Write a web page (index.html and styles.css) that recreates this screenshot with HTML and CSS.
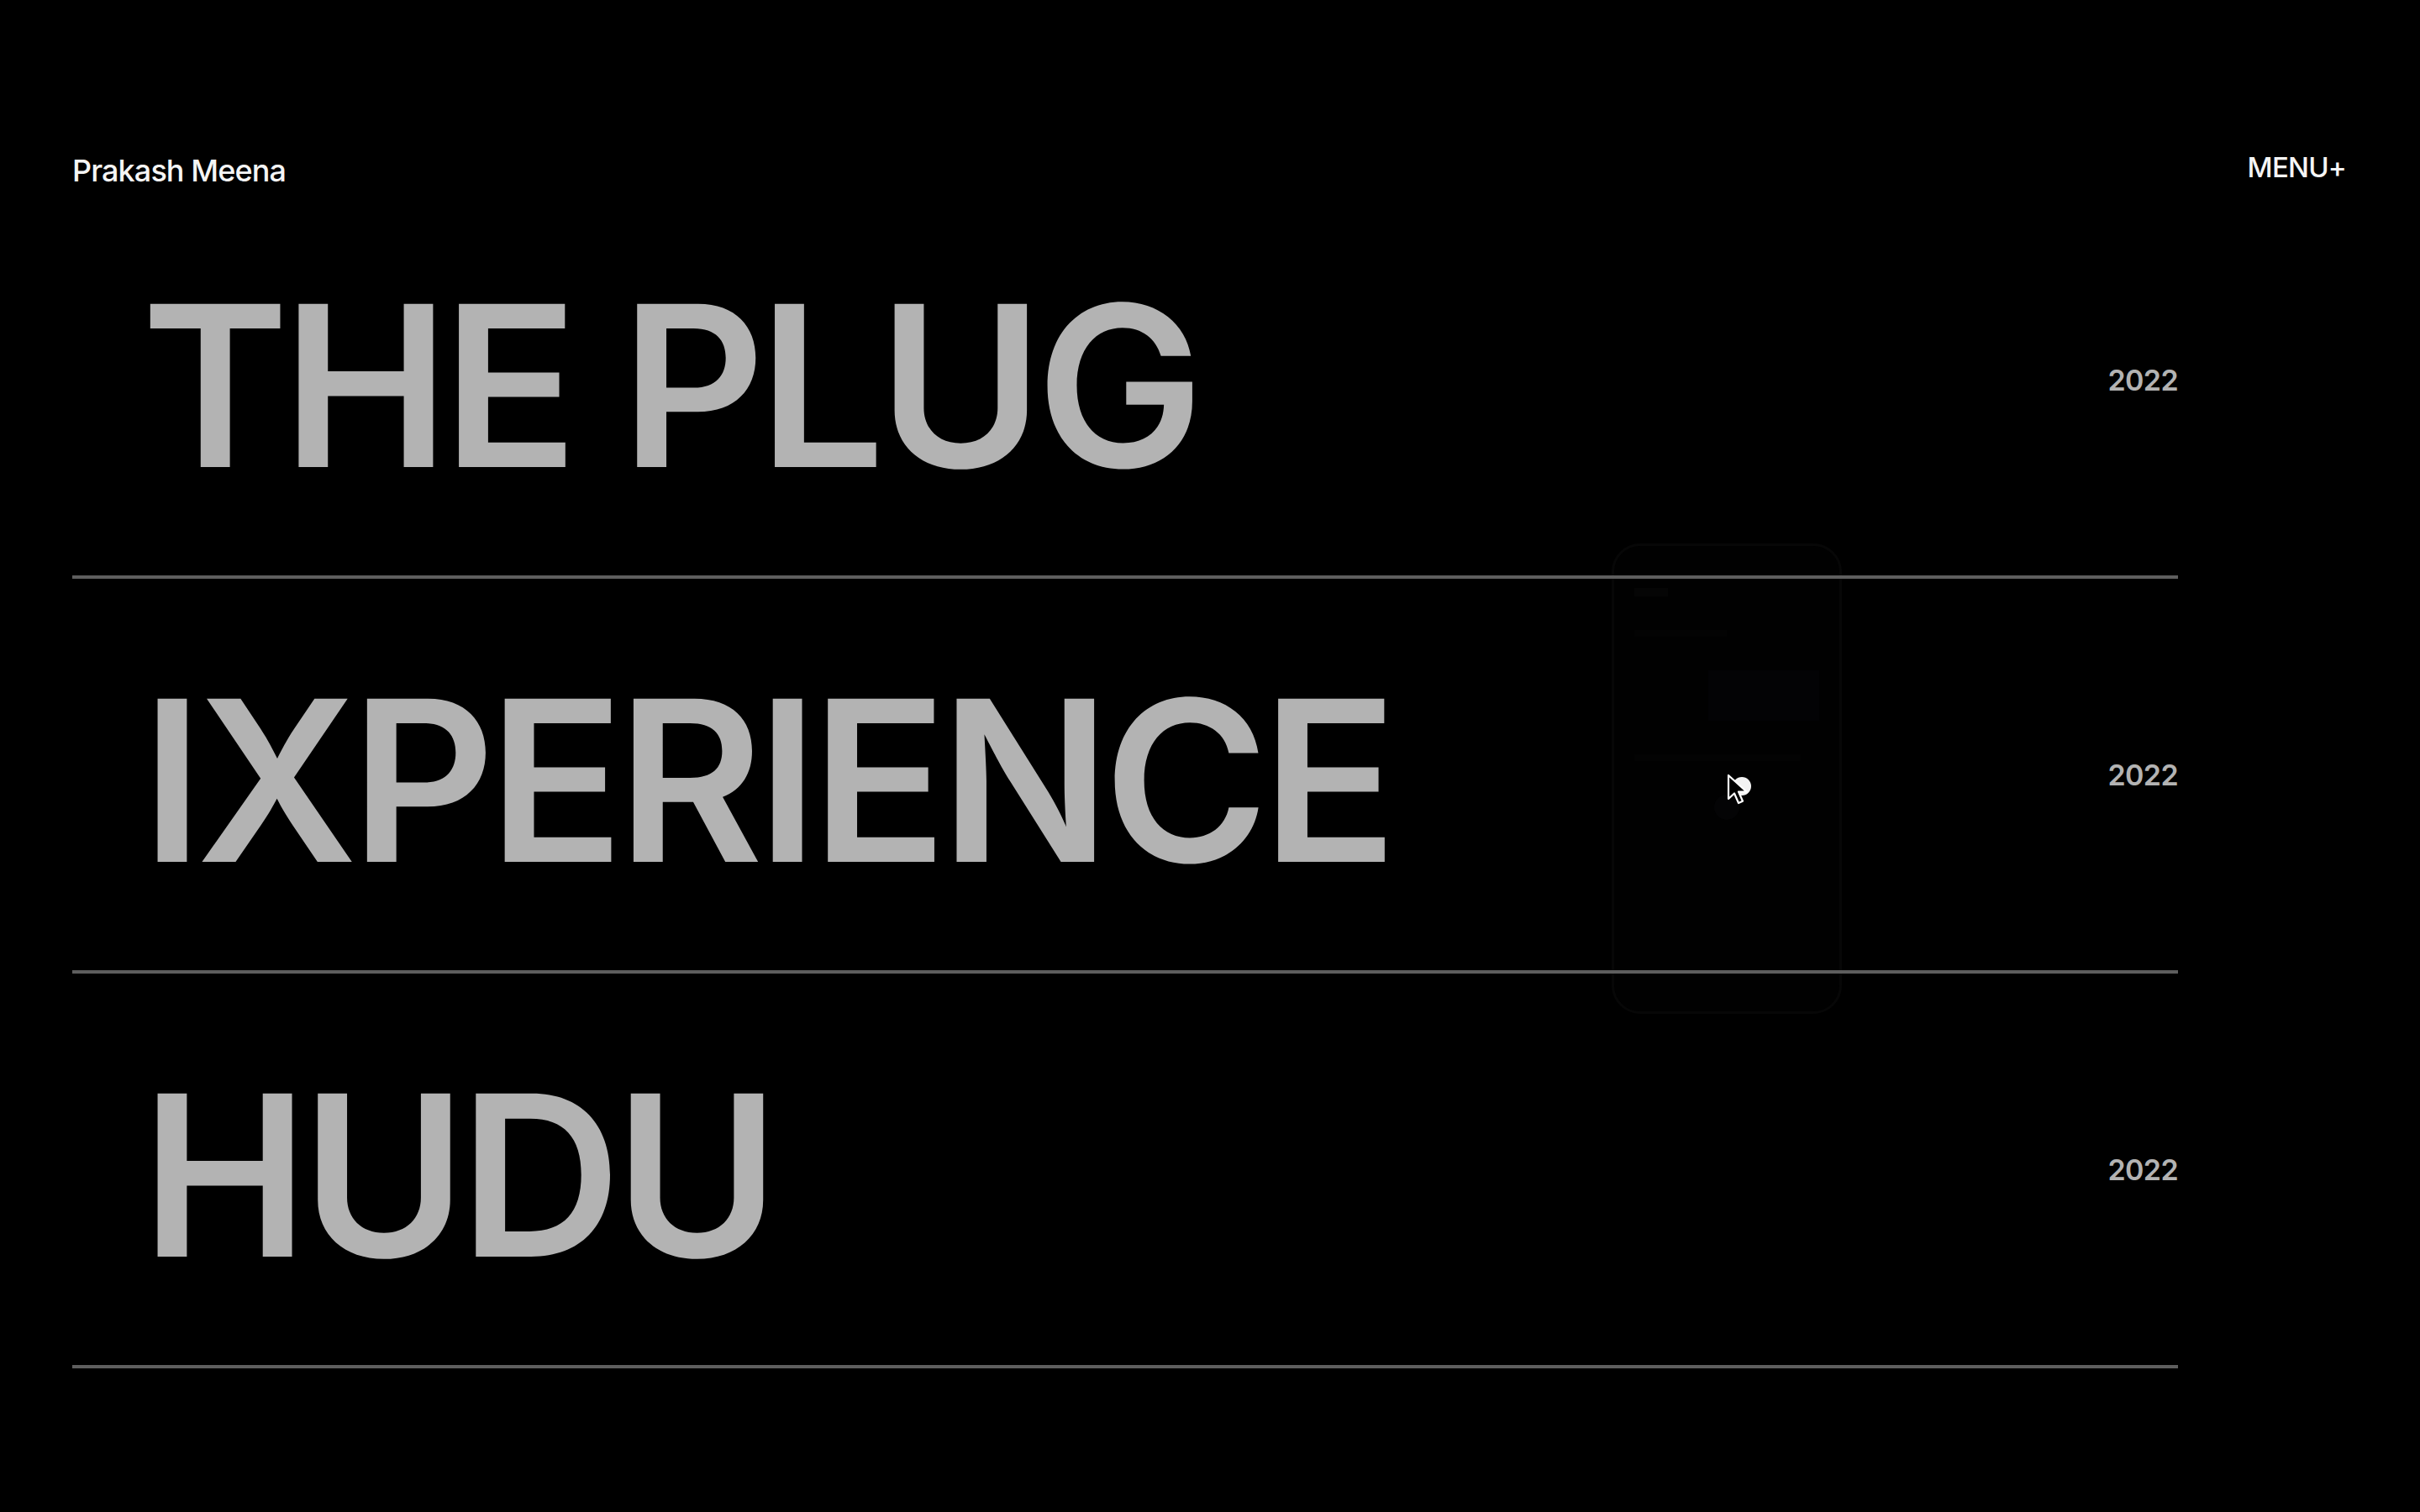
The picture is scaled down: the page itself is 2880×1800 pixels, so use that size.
FILE: index.html
```html
<!DOCTYPE html>
<html lang="en">
<head>
<meta charset="utf-8">
<title>Prakash Meena — Work</title>
<link rel="stylesheet" href="styles.css">
</head>
<body>
<header class="site-header">
  <a class="brand" href="#">Prakash Meena</a>
  <button class="menu-btn" type="button">MENU+</button>
</header>

<main class="work">
  <ul class="work-list">
    <li class="work-row">
      <span class="work-title">THE PLUG</span>
      <span class="work-year">2022</span>
    </li>
    <li class="work-row">
      <span class="work-title">IXPERIENCE</span>
      <span class="work-year">2022</span>
    </li>
    <li class="work-row">
      <span class="work-title">HUDU</span>
      <span class="work-year">2022</span>
    </li>
  </ul>

  <div class="preview" aria-hidden="true">
    <div class="preview-bar"></div>
    <div class="preview-line short"></div>
    <div class="preview-block"></div>
    <div class="preview-line"></div>
    <div class="preview-dot"></div>
  </div>
</main>

<svg class="cursor" width="32" height="44" viewBox="0 0 32 44" aria-hidden="true">
  <circle cx="18" cy="15" r="11" fill="#f2f2f2"/>
  <path d="M2 2 L2 30 L9 23.5 L14 35 L19 32.8 L14 21.5 L23.5 21.5 Z" fill="#000" stroke="#fff" stroke-width="2.2" stroke-linejoin="round"/>
</svg>
</body>
</html>
```

FILE: styles.css
```css
* { box-sizing: border-box; }

html, body {
  margin: 0;
  padding: 0;
  background: #000;
  height: 100%;
}

body {
  font-family: Inter, "Liberation Sans", Arial, sans-serif;
  color: #f4f4f4;
  overflow: hidden;
  position: relative;
  min-height: 1800px;
}

.site-header {
  display: flex;
  justify-content: space-between;
  align-items: flex-start;
  padding: 181px 88px 0 86px;
  height: 219px;
}

.brand {
  color: #f5f5f5;
  text-decoration: none;
  font-size: 36px;
  font-weight: 500;
  letter-spacing: -0.9px;
  line-height: 1;
  padding-top: 4px;
}

.menu-btn {
  background: none;
  border: 0;
  padding: 0;
  color: #f5f5f5;
  font-family: inherit;
  font-size: 33px;
  font-weight: 500;
  letter-spacing: -0.8px;
  line-height: 1;
  cursor: pointer;
  margin-top: 2px;
}

.work {
  position: relative;
  padding: 0 288px 0 86px;
}

.work-list {
  list-style: none;
  margin: 0;
  padding: 0;
  position: relative;
  z-index: 2;
}

.work-row {
  display: flex;
  align-items: center;
  justify-content: space-between;
  height: 470px;
  border-bottom: 4px solid #5e5e5e;
  padding-left: 82px;
}

.work-title {
  font-size: 267px;
  font-weight: 600;
  line-height: 1;
  color: #b3b3b3;
  letter-spacing: -8.4px;
  padding-top: 12px;
}

.work-year {
  font-size: 34px;
  font-weight: 600;
  color: #b3b3b3;
  letter-spacing: -0.6px;
  line-height: 1;
  padding-top: 2px;
}

.preview {
  position: absolute;
  left: 1918px;
  top: 428px;
  width: 274px;
  height: 560px;
  border: 3px solid #070707;
  border-radius: 34px;
  background: #010101;
  z-index: 1;
  display: flex;
  flex-direction: column;
  gap: 40px;
  padding: 50px 24px;
}

.preview-bar {
  width: 40px;
  height: 10px;
  background: #050505;
}

.preview-line {
  height: 8px;
  width: 90%;
  background: #030303;
}

.preview-line.short { width: 50%; }

.preview-block {
  height: 60px;
  width: 60%;
  margin-left: auto;
  background: #030305;
}

.preview-dot {
  width: 30px;
  height: 30px;
  border-radius: 50%;
  background: #040405;
  align-self: center;
}

.cursor {
  position: absolute;
  left: 2055px;
  top: 921px;
  z-index: 5;
}
```
